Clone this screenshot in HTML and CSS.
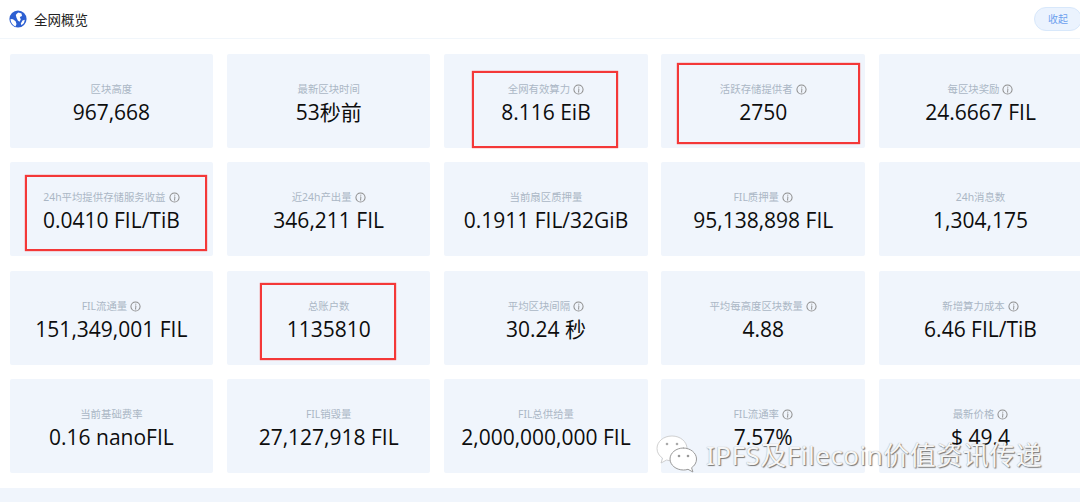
FILE: index.html
```html
<!DOCTYPE html>
<html lang="zh">
<head>
<meta charset="utf-8">
<title>全网概览</title>
<link rel="stylesheet" href="styles.css">
</head>
<body>
<svg width="0" height="0" class="defs">
  <symbol id="info" viewBox="0 0 12 12">
    <circle cx="6" cy="6" r="5" fill="none" stroke="currentColor" stroke-width="1.1"/>
    <path d="M6.3 2.9v1.2M5.8 5.3h.7L6 9h.7" fill="none" stroke="currentColor" stroke-width="1"/>
  </symbol>
</svg>
<div class="page">
  <header class="head">
    <div class="title">
      <svg class="globe" viewBox="0 0 18 18">
        <circle cx="9" cy="9" r="8.6" fill="#2c5fd2"/>
        <path d="M9.5 2.500 12.500 3.500 13 6 10.800 7 11.800 9.500 10.500 11.800 8.800 10.500 7.500 7.800 6.800 5 8 3.500ZM1.500 9 4 9.200 6.600 11.200 7.500 14 6.500 16.400C3.500 15.200 1.500 12.500 1.500 9ZM13.500 10.500 15.800 9.800 15 13 12.500 15.200 11.800 13.500Z" fill="#fff"/>
      </svg>
      <span>全网概览</span>
    </div>
    <button class="collapse">收起</button>
  </header>
  <main class="grid">
    <div class="card"><div class="label">区块高度</div><div class="value">967,668</div></div>
    <div class="card"><div class="label">最新区块时间</div><div class="value">53秒前</div></div>
    <div class="card"><div class="label">全网有效算力<svg class="i"><use href="#info"/></svg></div><div class="value">8.116 EiB</div></div>
    <div class="card"><div class="label">活跃存储提供者<svg class="i"><use href="#info"/></svg></div><div class="value">2750</div></div>
    <div class="card"><div class="label">每区块奖励<svg class="i"><use href="#info"/></svg></div><div class="value">24.6667 FIL</div></div>

    <div class="card"><div class="label">24h平均提供存储服务收益<svg class="i"><use href="#info"/></svg></div><div class="value">0.0410 FIL/TiB</div></div>
    <div class="card"><div class="label">近24h产出量<svg class="i"><use href="#info"/></svg></div><div class="value">346,211 FIL</div></div>
    <div class="card"><div class="label">当前扇区质押量</div><div class="value">0.1911 FIL/32GiB</div></div>
    <div class="card"><div class="label">FIL质押量<svg class="i"><use href="#info"/></svg></div><div class="value">95,138,898 FIL</div></div>
    <div class="card"><div class="label">24h消息数</div><div class="value">1,304,175</div></div>

    <div class="card"><div class="label">FIL流通量<svg class="i"><use href="#info"/></svg></div><div class="value">151,349,001 FIL</div></div>
    <div class="card"><div class="label">总账户数</div><div class="value">1135810</div></div>
    <div class="card"><div class="label">平均区块间隔<svg class="i"><use href="#info"/></svg></div><div class="value">30.24 秒</div></div>
    <div class="card"><div class="label">平均每高度区块数量<svg class="i"><use href="#info"/></svg></div><div class="value">4.88</div></div>
    <div class="card"><div class="label">新增算力成本<svg class="i"><use href="#info"/></svg></div><div class="value">6.46 FIL/TiB</div></div>

    <div class="card"><div class="label">当前基础费率</div><div class="value">0.16 nanoFIL</div></div>
    <div class="card"><div class="label">FIL销毁量</div><div class="value">27,127,918 FIL</div></div>
    <div class="card"><div class="label">FIL总供给量</div><div class="value">2,000,000,000 FIL</div></div>
    <div class="card"><div class="label">FIL流通率<svg class="i"><use href="#info"/></svg></div><div class="value">7.57%</div></div>
    <div class="card"><div class="label">最新价格<svg class="i"><use href="#info"/></svg></div><div class="value">$ 49.4</div></div>

    <div class="strip"></div>
  </main>
</div>
<div class="mark mark-a"></div>
<div class="mark mark-b"></div>
<div class="mark mark-c"></div>
<div class="mark mark-d"></div>
<div class="wm">
  <svg class="wm-icon" viewBox="0 0 42 38">
    <path d="M16 1C7.500 1 1 6.500 1 13.500c0 4 2.200 7.400 5.600 9.700L5 28l5.600-3c1.600.5 3.400.8 5.400.8 8.500 0 15-5.600 15-12.300S24.500 1 16 1Z" fill="#fff" stroke="#c4c4c4" stroke-width=".8"/>
    <path d="M27.500 13C20 13 14 18 14 24s6 11 13.500 11c1.600 0 3.100-.2 4.500-.7l4.900 2.700-1.300-4.300c3-2 4.900-5 4.900-8.700 0-6-6-11-13.500-11Z" fill="#fff" stroke="#9a9a9a" stroke-width="1"/>
    <circle cx="11" cy="9" r="1.300" fill="#aaa"/><circle cx="21" cy="9" r="1.300" fill="#aaa"/>
    <circle cx="23" cy="21" r="1.300" fill="#999"/><circle cx="32" cy="21" r="1.300" fill="#999"/>
  </svg>
  <span class="wm-text">IPFS及Filecoin价值资讯传递</span>
</div>
</body>
</html>
```
FILE: styles.css
```css
* { box-sizing: border-box; }
html, body { margin: 0; padding: 0; }
body {
  width: 1080px;
  height: 502px;
  overflow: hidden;
  position: relative;
  background: #fff;
  font-family: "Open Sans", "Noto Sans CJK SC", sans-serif;
}
.defs { position: absolute; }
.page { height: 502px; overflow: hidden; }
.head {
  height: 39px;
  display: flex;
  align-items: center;
  justify-content: space-between;
  border-bottom: 1px solid #f1f6fb;
  padding: 0 0 1px 9px;
}
.title {
  display: flex;
  align-items: center;
  gap: 7px;
  font-family: "Noto Sans CJK SC", sans-serif;
  font-size: 13.500px;
  color: #222;
}
.globe { width: 18px; height: 18px; }
.collapse {
  width: 48px;
  height: 24px;
  margin-right: -2px;
  padding: 0;
  border: 1px solid #d8e8fb;
  border-radius: 12px;
  background: #ebf3fe;
  color: #6c9fee;
  font-family: "Noto Sans CJK SC", sans-serif;
  font-size: 10px;
}
.grid {
  display: grid;
  grid-template-columns: repeat(5, 203.600px);
  grid-template-rows: repeat(4, 94.300px) 14.400px;
  column-gap: 13.700px;
  row-gap: 14.200px;
  padding: 14.600px 0 0 9.600px;
}
.card {
  background: #f0f5fc;
  border-radius: 2px;
  padding-top: 28px;
  text-align: center;
}
.strip {
  grid-column: 1 / -1;
  margin-left: -9.600px;
  background: #f0f5fc;
}
.label {
  height: 15px;
  line-height: 15px;
  font-size: 10.400px;
  color: #abb7c5;
  font-family: "Noto Sans", "Noto Sans CJK SC", sans-serif;
  display: flex;
  justify-content: center;
  align-items: center;
}
.i {
  width: 11px;
  height: 11px;
  margin-left: 3px;
  color: #8e8e8e;
}
.value {
  font-size: 21px;
  line-height: 30px;
  color: #0d0d0d;
}
.mark {
  position: absolute;
  border: 2px solid #f43838;
  box-shadow: 0 0 1px #f43838;
}
.mark-a { left: 472px; top: 71px; width: 146px; height: 77px; }
.mark-b { left: 677px; top: 63px; width: 183px; height: 81px; }
.mark-c { left: 25px; top: 175px; width: 182px; height: 76px; }
.mark-d { left: 260px; top: 283px; width: 136px; height: 77px; }
.wm {
  position: absolute;
  left: 656px;
  top: 435px;
  display: flex;
  align-items: center;
  gap: 8px;
}
.wm-icon { width: 42px; height: 38px; }
.wm-text {
  font-family: "Noto Sans", "Noto Sans CJK SC", sans-serif;
  font-size: 26px;
  letter-spacing: .5px;
  color: #f6f6f6;
  text-shadow: 1px 1px 1px #777, 0 0 1px #999;
}
```
